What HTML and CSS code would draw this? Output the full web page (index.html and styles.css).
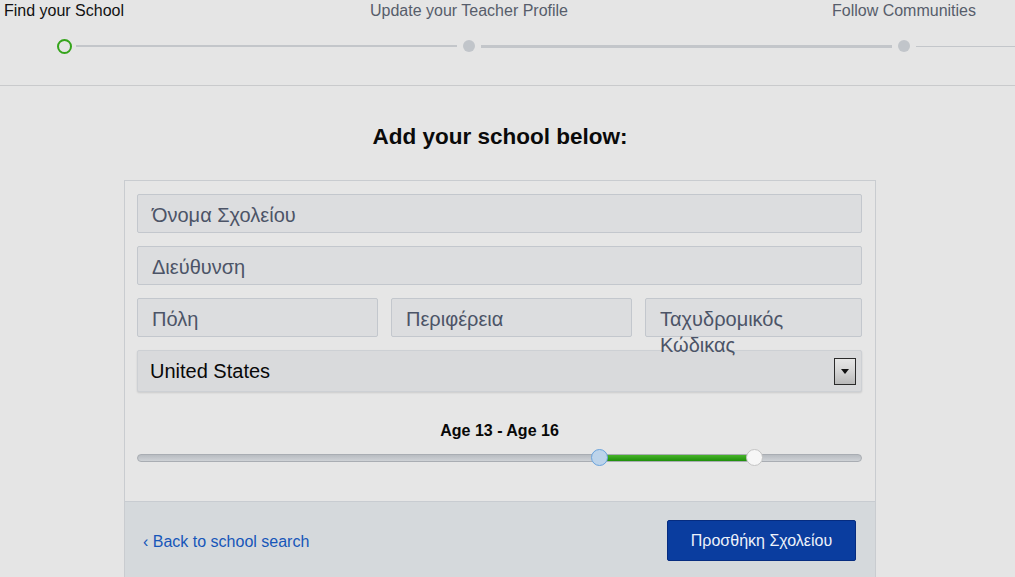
FILE: index.html
```html
<!DOCTYPE html>
<html lang="el">
<head>
<meta charset="utf-8">
<title>Add your school</title>
<link rel="stylesheet" href="styles.css">
</head>
<body>
<div class="page">
  <header class="steps">
    <div class="step-labels">
      <div class="step-label active">Find your School</div>
      <div class="step-label">Update your Teacher Profile</div>
      <div class="step-label">Follow Communities</div>
    </div>
    <div class="track">
      <span class="dot current"></span>
      <span class="seg seg-thin"></span>
      <span class="dot"></span>
      <span class="seg seg-thick"></span>
      <span class="dot"></span>
      <span class="seg seg-hair"></span>
    </div>
  </header>

  <main class="main">
    <h1 class="title">Add your school below:</h1>
    <section class="card">
      <div class="card-body">
        <div class="field">Όνομα Σχολείου</div>
        <div class="field">Διεύθυνση</div>
        <div class="row3">
          <div class="field">Πόλη</div>
          <div class="field">Περιφέρεια</div>
          <div class="field">Ταχυδρομικός Κώδικας</div>
        </div>
        <div class="select">
          <span class="select-value">United States</span>
          <span class="select-btn"><span class="tri"></span></span>
        </div>
        <div class="age">Age 13 - Age 16</div>
        <div class="slider">
          <div class="range" style="left:63.9%;width:21.5%"></div>
          <span class="handle handle-a" style="left:63.9%"></span>
          <span class="handle handle-b" style="left:85.4%"></span>
        </div>
      </div>
      <div class="card-foot">
        <a class="back" href="#">‹ Back to school search</a>
        <button class="submit" type="button">Προσθήκη Σχολείου</button>
      </div>
    </section>
  </main>
</div>
</body>
</html>
```

FILE: styles.css
```css
html, body {
  margin: 0;
  padding: 0;
  background: #e5e5e5;
  font-family: "Liberation Sans", Arial, sans-serif;
  overflow: hidden;
}

.page {
  width: 1015px;
}

.steps {
  height: 85px;
  border-bottom: 1px solid #c9cacc;
  box-sizing: content-box;
}

.step-labels {
  display: grid;
  grid-template-columns: 128px 682px 188px;
  height: 21px;
}

.step-label {
  text-align: center;
  font-size: 16px;
  line-height: 21px;
  color: #575d6b;
  white-space: nowrap;
}

.step-label.active {
  color: #111;
}

.track {
  display: flex;
  align-items: center;
  height: 16px;
  margin-top: 17px;
  padding-left: 57px;
}

.dot {
  flex: none;
  width: 12px;
  height: 12px;
  border-radius: 50%;
  background: #c1c5ca;
}

.dot.current {
  width: 11px;
  height: 11px;
  background: transparent;
  border: 2px solid #35a41b;
}

.seg {
  background: #c3c6ca;
}

.seg-thin {
  width: 381px;
  height: 2px;
  margin: 0 6px 0 4px;
}

.seg-thick {
  width: 411px;
  height: 3px;
  margin: 0 6px;
}

.seg-hair {
  flex: 1;
  height: 1px;
  margin-left: 6px;
}

.main {
  width: 1000px;
  display: flex;
  flex-direction: column;
  align-items: center;
}

.title {
  margin: 38px 0 0;
  font-size: 22.5px;
  line-height: 26px;
  font-weight: bold;
  color: #0a0a0a;
}

.card {
  margin-top: 30px;
  width: 752px;
  box-sizing: border-box;
  border: 1px solid #c9ccd0;
  background: #e6e6e6;
}

.card-body {
  padding: 13px 13px 0 12px;
  display: flex;
  flex-direction: column;
  gap: 13px;
  height: 320px;
  box-sizing: border-box;
}

.field {
  box-sizing: border-box;
  height: 39px;
  padding: 7px 14px 0;
  border: 1px solid #c3c7cd;
  border-radius: 2px;
  background: #dcdddf;
  font-size: 20px;
  line-height: 26px;
  color: #4c5467;
}

.row3 {
  position: relative;
  z-index: 1;
  display: grid;
  grid-template-columns: 241px 241px 1fr;
  gap: 13px;
}

.select {
  box-sizing: border-box;
  height: 42px;
  display: flex;
  align-items: center;
  justify-content: space-between;
  padding: 0 5px 0 12px;
  border: 1px solid #cdd0d4;
  border-radius: 2px;
  background: #d9dadc;
  box-shadow: 0 1px 2px rgba(0, 0, 0, 0.12);
}

.select-value {
  font-size: 20px;
  color: #080808;
}

.select-btn {
  box-sizing: border-box;
  width: 22px;
  height: 27px;
  border: 1px solid #2b2b2b;
  background: linear-gradient(#e6e6e6, #d6d6d6 45%, #b9b9b9);
  display: flex;
  justify-content: center;
  padding-top: 10px;
}

.tri {
  width: 0;
  height: 0;
  border-left: 4px solid transparent;
  border-right: 4px solid transparent;
  border-top: 5px solid #111;
}

.age {
  margin-top: 17px;
  text-align: center;
  font-size: 16px;
  font-weight: bold;
  color: #080808;
}

.slider {
  position: relative;
  margin-top: 1px;
  height: 8px;
  box-sizing: border-box;
  border: 1px solid #a9adb3;
  border-radius: 4px;
  background: linear-gradient(#b8bcc1, #cfd2d6);
}

.range {
  position: absolute;
  top: 0;
  bottom: 0;
  background: linear-gradient(#47b32a, #1f8f0a);
}

.handle {
  position: absolute;
  top: 50%;
  width: 15px;
  height: 15px;
  margin: -9px 0 0 -9px;
  border-radius: 50%;
}

.handle-a {
  background: #bcd3ea;
  border: 1.5px solid #6aa3dc;
}

.handle-b {
  background: #f6f6f6;
  border: 1.5px solid #c4c4c4;
}

.card-foot {
  height: 80px;
  box-sizing: border-box;
  border-top: 1px solid #c8ccd1;
  background: #d5d9dc;
  display: flex;
  align-items: flex-start;
  justify-content: space-between;
  padding: 18px 19px 0 18px;
}

.back {
  margin-top: 13px;
  font-size: 16px;
  color: #1656b9;
  text-decoration: none;
}

.submit {
  width: 189px;
  height: 41px;
  border: 1px solid #062c80;
  border-radius: 2px;
  background: #0a3d9f;
  color: #eef2fa;
  font-family: "Liberation Sans", Arial, sans-serif;
  font-size: 16px;
  padding: 0;
}
```
